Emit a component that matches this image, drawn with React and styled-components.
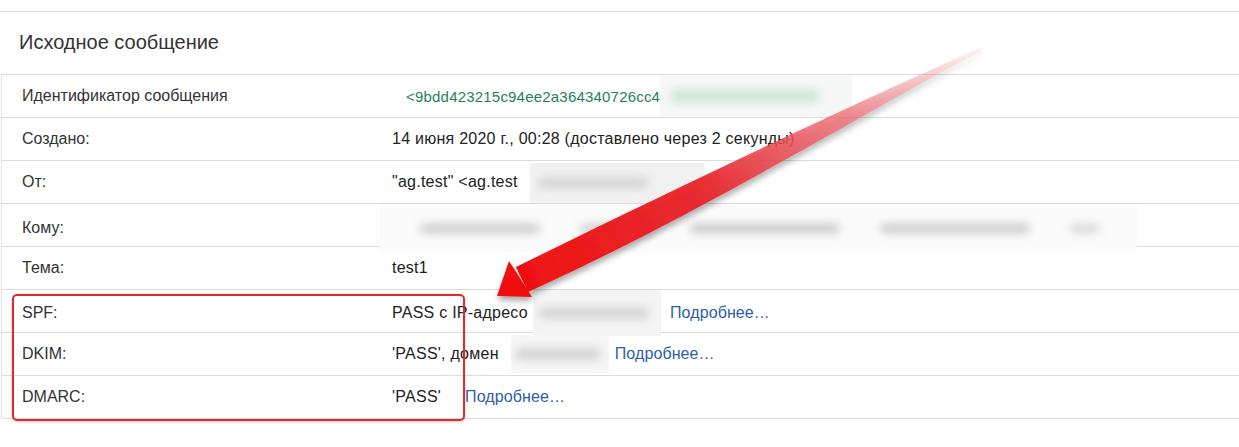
import React from "react";
import styled, { createGlobalStyle } from "styled-components";

const Global = createGlobalStyle`
  html, body { margin: 0; padding: 0; background: #fff; }
  body { font-family: "Liberation Sans", Arial, sans-serif; color: #222; }
`;

const Page = styled.div`
  position: relative;
  width: 1239px;
  height: 447px;
  overflow: hidden;
  background: #fff;
`;

const TopStrip = styled.div`
  height: 11px;
  border-bottom: 1px solid #dcdcdc;
`;

const Heading = styled.h2`
  margin: 0;
  height: 62px;
  box-sizing: border-box;
  padding: 0 0 2px 19px;
  display: flex;
  align-items: center;
  font-size: 20px;
  font-weight: normal;
  color: #333;
`;

const Table = styled.div`
  margin-left: 1px;
  border-left: 1px solid #e2e2e2;
  border-top: 1px solid #dcdcdc;
`;

const Row = styled.div`
  display: grid;
  grid-template-columns: 370px 1fr;
  height: 42px;
  border-bottom: 1px solid #dcdcdc;
  align-items: center;
`;

const Label = styled.div`
  padding-left: 20px;
  font-size: 16px;
  color: #333;
`;

const Value = styled.div`
  padding-left: 20px;
  font-size: 16px;
  letter-spacing: 0.25px;
  color: #222;
  display: flex;
  align-items: center;
  white-space: nowrap;
  height: 100%;
`;

const Green = styled.span`
  color: #1f8257;
  font-size: 15px;
  letter-spacing: 0.2px;
  margin-left: 14px;
`;

const Link = styled.a`
  color: #2e5eaa;
  text-decoration: none;
  letter-spacing: 0.1px;
  margin-left: ${(p) => p.$gap || 8}px;
`;

const Redact = styled.span`
  display: inline-flex;
  align-items: center;
  gap: ${(p) => p.$gap || 0}px;
  box-sizing: border-box;
  padding-left: ${(p) => p.$pad || 8}px;
  width: ${(p) => p.$w}px;
  height: ${(p) => p.$h || 42}px;
  margin-left: ${(p) => p.$ml || 0}px;
  background: ${(p) => p.$bg || "#f5f5f5"};
  overflow: hidden;
  flex-shrink: 0;
  align-self: ${(p) => p.$self || "center"};
`;

const Smudge = styled.span`
  flex-shrink: 0;
  width: ${(p) => p.$w}px;
  height: ${(p) => p.$h || 10}px;
  background: ${(p) => p.$c || "#bdbdbd"};
  border-radius: 6px;
  filter: blur(5px);
`;

const Callout = styled.div`
  position: absolute;
  left: 12px;
  top: 294px;
  width: 449px;
  height: 123px;
  border: 2px solid #e2282d;
  border-radius: 5px;
  box-shadow: 0 1px 3px rgba(0, 0, 0, 0.2);
  pointer-events: none;
`;

const ArrowSvg = styled.svg`
  position: absolute;
  left: 0;
  top: 0;
  pointer-events: none;
`;

function Arrow() {
  return (
    <ArrowSvg width="1239" height="447" viewBox="0 0 1239 447">
      <defs>
        <linearGradient id="shaft" x1="982" y1="48" x2="520" y2="280" gradientUnits="userSpaceOnUse">
          <stop offset="0" stopColor="#f4a6ad" stopOpacity="0.15" />
          <stop offset="0.3" stopColor="#ec6a72" stopOpacity="0.75" />
          <stop offset="0.6" stopColor="#e8262d" stopOpacity="0.95" />
          <stop offset="1" stopColor="#ee1010" />
        </linearGradient>
        <filter id="sh" x="-10%" y="-10%" width="120%" height="130%">
          <feGaussianBlur in="SourceAlpha" stdDeviation="3" />
          <feOffset dx="1" dy="4" result="b" />
          <feComponentTransfer>
            <feFuncA type="linear" slope="0.35" />
          </feComponentTransfer>
          <feMerge>
            <feMergeNode />
            <feMergeNode in="SourceGraphic" />
          </feMerge>
        </filter>
      </defs>
      <g filter="url(#sh)">
        <path
          d="M982 47 C 880 92, 700 176, 516 267 L 528 292 C 700 214, 880 104, 983 50 Z"
          fill="url(#shaft)"
        />
        <polygon points="509,261 497,296 532,297" fill="#ef0f0f" />
      </g>
    </ArrowSvg>
  );
}

const rows = [
  {
    label: "Идентификатор сообщения",
    value: (
      <>
        <Green>&lt;9bdd423215c94ee2a364340726cc4</Green>
        <Redact $w={192} $pad={10} $bg="#f6f8f7">
          <Smudge $w={150} $h={12} $c="#cfe2d6" />
        </Redact>
      </>
    ),
  },
  { label: "Создано:", value: "14 июня 2020 г., 00:28 (доставлено через 2 секунды)" },
  {
    label: "От:",
    value: (
      <>
        <span>"ag.test" &lt;ag.test</span>
        <Redact $w={174} $h={40} $ml={12} $bg="#f1f1f1" $self="flex-end">
          <Smudge $w={110} $h={10} $c="#d2d2d2" />
        </Redact>
      </>
    ),
  },
  {
    label: "Кому:",
    value: (
      <Redact $w={757} $h={48} $ml={-12} $pad={40} $gap={40} $bg="#fbfbfb">
        <Smudge $w={120} $h={9} $c="#c8c8c8" />
        <Smudge $w={70} $h={9} $c="#cdcdcd" />
        <Smudge $w={150} $h={9} $c="#c4c4c4" />
        <Smudge $w={150} $h={9} $c="#c8c8c8" />
        <Smudge $w={30} $h={9} $c="#d6d6d6" />
      </Redact>
    ),
  },
  { label: "Тема:", value: "test1" },
  {
    label: "SPF:",
    value: (
      <>
        <span>PASS с IP-адресо</span>
        <Redact $w={128} $h={46} $ml={5} $pad={6} $bg="#f4f4f4">
          <Smudge $w={110} $h={10} $c="#d0d0d0" />
        </Redact>
        <Link href="#" $gap={9}>Подробнее…</Link>
      </>
    ),
  },
  {
    label: "DKIM:",
    value: (
      <>
        <span>'PASS', домен</span>
        <Redact $w={98} $h={38} $ml={12} $pad={4} $bg="#f6f6f6">
          <Smudge $w={86} $h={12} $c="#d3d3d3" />
        </Redact>
        <Link href="#" $gap={6}>Подробнее…</Link>
      </>
    ),
  },
  {
    label: "DMARC:",
    value: (
      <>
        <span>'PASS'</span>
        <Link href="#" $gap={24}>Подробнее…</Link>
      </>
    ),
  },
];

export default function App() {
  return (
    <Page>
      <Global />
      <TopStrip />
      <Heading>Исходное сообщение</Heading>
      <Table>
        {rows.map((r) => (
          <Row key={r.label}>
            <Label>{r.label}</Label>
            <Value>{r.value}</Value>
          </Row>
        ))}
      </Table>
      <Callout />
      <Arrow />
    </Page>
  );
}
